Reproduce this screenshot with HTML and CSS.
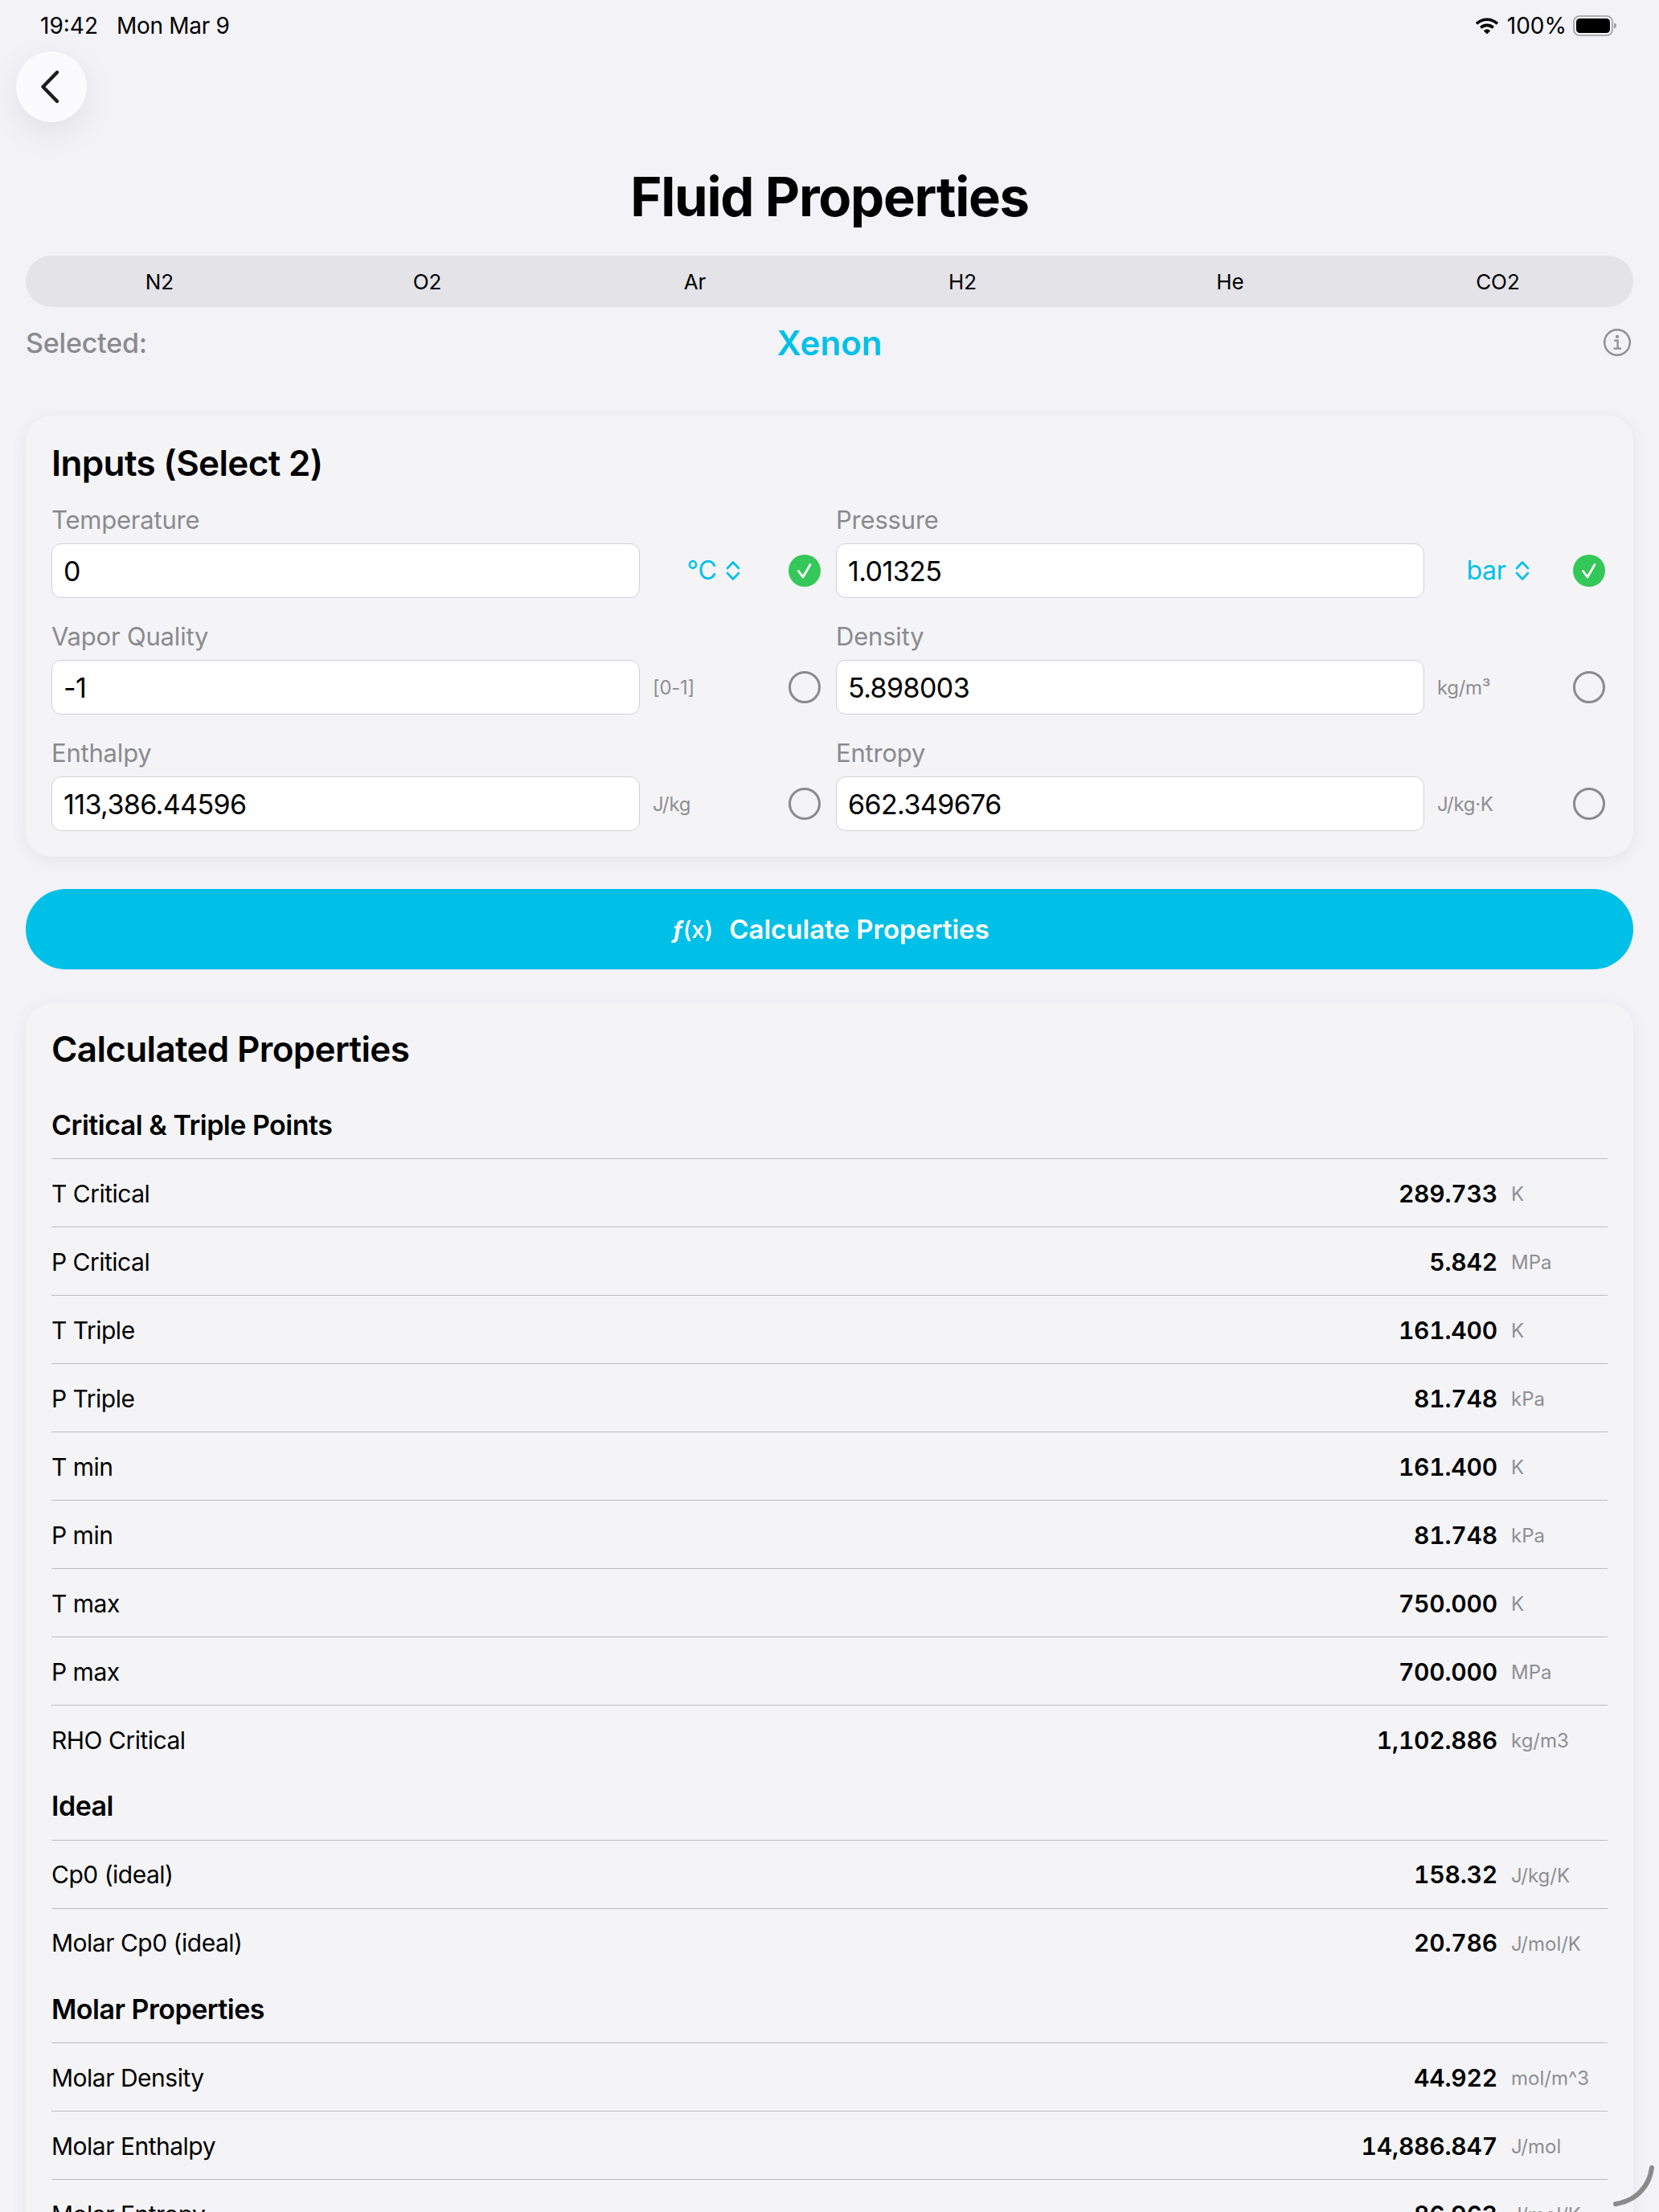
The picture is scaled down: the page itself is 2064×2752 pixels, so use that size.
FILE: index.html
```html
<!DOCTYPE html>
<html lang="en">
<head>
    <meta charset="UTF-8">
    <meta name="viewport" content="width=device-width, initial-scale=1.0">
    <title>Fluid Properties</title>
    <link rel="stylesheet" href="styles.css">
</head>
<body>
    <div class="screen">
        <!-- Status bar -->
        <div class="status-bar">
            <div class="status-left">
                <span>19:42</span>
                <span class="status-date">Mon Mar 9</span>
            </div>
            <div class="status-right">
                <svg class="wifi" width="30" height="22" viewBox="0 0 30 22">
                    <path d="M2 8.5C9.5 1.5 20.5 1.5 28 8.5" fill="none" stroke="#000" stroke-width="3.6"/>
                    <path d="M7.2 13.4C11.8 9.4 18.2 9.4 22.8 13.4" fill="none" stroke="#000" stroke-width="3.6"/>
                    <path d="M10.8 17.2C13.2 15 16.8 15 19.2 17.2L15 21.5Z" fill="#000"/>
                </svg>
                <span>100%</span>
                <svg class="battery" width="55" height="26" viewBox="0 0 55 26">
                    <rect x="1" y="1" width="48" height="24" rx="7" fill="none" stroke="#9a9a9c" stroke-width="1.6"/>
                    <rect x="4" y="4" width="42" height="18" rx="4.5" fill="#000"/>
                    <path d="M51 9.5C53 10 54 11.4 54 13C54 14.6 53 16 51 16.5Z" fill="#9a9a9c"/>
                </svg>
            </div>
        </div>

        <button class="back-button">
            <svg width="26" height="42" viewBox="0 0 26 42">
                <path d="M22 3L4.5 21L22 39" fill="none" stroke="#1c1c1e" stroke-width="4.4" stroke-linecap="round" stroke-linejoin="round"/>
            </svg>
        </button>

        <h1 class="page-title">Fluid Properties</h1>

        <div class="segments">
            <div class="segment">N2</div>
            <div class="segment">O2</div>
            <div class="segment">Ar</div>
            <div class="segment">H2</div>
            <div class="segment">He</div>
            <div class="segment">CO2</div>
        </div>

        <div class="selected-row">
            <span class="selected-label">Selected:</span>
            <span class="selected-name">Xenon</span>
            <svg class="info-icon" width="36" height="36" viewBox="0 0 36 36">
                <circle cx="18" cy="18" r="15.8" fill="none" stroke="#8e8e93" stroke-width="2.4"/>
                <circle cx="18" cy="10.8" r="2.1" fill="#8e8e93"/>
                <path d="M14.2 15.6H18.6V25.4M13.6 25.6H23" fill="none" stroke="#8e8e93" stroke-width="2.3"/>
            </svg>
        </div>

        <!-- Inputs -->
        <section class="card inputs-card">
            <h2 class="card-title">Inputs (Select 2)</h2>
            <div class="input-grid">
                <div class="field">
                    <label class="field-label">Temperature</label>
                    <div class="field-row">
                        <input class="field-input" value="0">
                        <div class="unit unit-picker">
                            <span>°C</span>
                            <svg width="18" height="26" viewBox="0 0 18 26"><path d="M2 10L9 2.5L16 10M2 16L9 23.5L16 16" fill="none" stroke="#00c0e8" stroke-width="2.6" stroke-linecap="round" stroke-linejoin="round"/></svg>
                        </div>
                        <div class="radio checked">
                            <svg width="40" height="40" viewBox="0 0 40 40"><circle cx="20" cy="20" r="20" fill="#34c759"/><path d="M12.5 20.5L18 28L27 12.5" fill="none" stroke="#fff" stroke-width="2.8" stroke-linecap="round" stroke-linejoin="round"/></svg>
                        </div>
                    </div>
                </div>
                <div class="field">
                    <label class="field-label">Pressure</label>
                    <div class="field-row">
                        <input class="field-input" value="1.01325">
                        <div class="unit unit-picker">
                            <span>bar</span>
                            <svg width="18" height="26" viewBox="0 0 18 26"><path d="M2 10L9 2.5L16 10M2 16L9 23.5L16 16" fill="none" stroke="#00c0e8" stroke-width="2.6" stroke-linecap="round" stroke-linejoin="round"/></svg>
                        </div>
                        <div class="radio checked">
                            <svg width="40" height="40" viewBox="0 0 40 40"><circle cx="20" cy="20" r="20" fill="#34c759"/><path d="M12.5 20.5L18 28L27 12.5" fill="none" stroke="#fff" stroke-width="2.8" stroke-linecap="round" stroke-linejoin="round"/></svg>
                        </div>
                    </div>
                </div>
                <div class="field">
                    <label class="field-label">Vapor Quality</label>
                    <div class="field-row">
                        <input class="field-input" value="-1">
                        <div class="unit">[0-1]</div>
                        <div class="radio"><span class="radio-ring"></span></div>
                    </div>
                </div>
                <div class="field">
                    <label class="field-label">Density</label>
                    <div class="field-row">
                        <input class="field-input" value="5.898003">
                        <div class="unit">kg/m³</div>
                        <div class="radio"><span class="radio-ring"></span></div>
                    </div>
                </div>
                <div class="field">
                    <label class="field-label">Enthalpy</label>
                    <div class="field-row">
                        <input class="field-input" value="113,386.44596">
                        <div class="unit">J/kg</div>
                        <div class="radio"><span class="radio-ring"></span></div>
                    </div>
                </div>
                <div class="field">
                    <label class="field-label">Entropy</label>
                    <div class="field-row">
                        <input class="field-input" value="662.349676">
                        <div class="unit">J/kg·K</div>
                        <div class="radio"><span class="radio-ring"></span></div>
                    </div>
                </div>
            </div>
        </section>

        <button class="calc-button">
            <span class="calc-icon"><i>ƒ</i>(x)</span>
            <span>Calculate Properties</span>
        </button>

        <!-- Results -->
        <section class="card results-card">
            <h2 class="card-title">Calculated Properties</h2>

            <h3 class="group-title">Critical &amp; Triple Points</h3>
            <div class="prop-row"><span class="prop-name">T Critical</span><span class="prop-value">289.733</span><span class="prop-unit">K</span></div>
            <div class="prop-row"><span class="prop-name">P Critical</span><span class="prop-value">5.842</span><span class="prop-unit">MPa</span></div>
            <div class="prop-row"><span class="prop-name">T Triple</span><span class="prop-value">161.400</span><span class="prop-unit">K</span></div>
            <div class="prop-row"><span class="prop-name">P Triple</span><span class="prop-value">81.748</span><span class="prop-unit">kPa</span></div>
            <div class="prop-row"><span class="prop-name">T min</span><span class="prop-value">161.400</span><span class="prop-unit">K</span></div>
            <div class="prop-row"><span class="prop-name">P min</span><span class="prop-value">81.748</span><span class="prop-unit">kPa</span></div>
            <div class="prop-row"><span class="prop-name">T max</span><span class="prop-value">750.000</span><span class="prop-unit">K</span></div>
            <div class="prop-row"><span class="prop-name">P max</span><span class="prop-value">700.000</span><span class="prop-unit">MPa</span></div>
            <div class="prop-row"><span class="prop-name">RHO Critical</span><span class="prop-value">1,102.886</span><span class="prop-unit">kg/m3</span></div>

            <h3 class="group-title">Ideal</h3>
            <div class="prop-row"><span class="prop-name">Cp0 (ideal)</span><span class="prop-value">158.32</span><span class="prop-unit">J/kg/K</span></div>
            <div class="prop-row"><span class="prop-name">Molar Cp0 (ideal)</span><span class="prop-value">20.786</span><span class="prop-unit">J/mol/K</span></div>

            <h3 class="group-title">Molar Properties</h3>
            <div class="prop-row"><span class="prop-name">Molar Density</span><span class="prop-value">44.922</span><span class="prop-unit">mol/m^3</span></div>
            <div class="prop-row"><span class="prop-name">Molar Enthalpy</span><span class="prop-value">14,886.847</span><span class="prop-unit">J/mol</span></div>
            <div class="prop-row"><span class="prop-name">Molar Entropy</span><span class="prop-value">86.963</span><span class="prop-unit">J/mol/K</span></div>
        </section>

        <!-- Window resize handle -->
        <svg class="resize-handle" width="54" height="52" viewBox="0 0 54 52">
            <path d="M49 3C46 26 30 44 4 48" fill="none" stroke="#8a8a8a" stroke-width="6" stroke-linecap="round"/>
        </svg>
    </div>
</body>
</html>
```

FILE: styles.css
```css
* {
    box-sizing: border-box;
}

body {
    margin: 0;
    font-family: Inter, "Noto Sans", sans-serif;
    background-color: #f2f2f7;
    color: #000;
}

.screen {
    position: relative;
    width: 2064px;
    height: 2752px;
    padding: 0 32px;
    overflow: hidden;
}

/* Status bar */
.status-bar {
    display: flex;
    justify-content: space-between;
    align-items: center;
    height: 64px;
    margin: 0 20px 0 18px;
    font-size: 28px;
    font-weight: 400;
}

.status-left {
    display: flex;
    gap: 23px;
}

.status-date {
    letter-spacing: -0.3px;
}

.status-right {
    display: flex;
    align-items: center;
    gap: 10px;
}

.battery {
    margin-left: -2px;
}

.back-button {
    position: absolute;
    top: 64px;
    left: 20px;
    display: flex;
    align-items: center;
    justify-content: center;
    width: 88px;
    height: 88px;
    padding: 0 4px 0 0;
    border: none;
    border-radius: 50%;
    background: #fbfbfd;
    box-shadow: 0 12px 40px rgba(0, 0, 0, 0.08);
}

.page-title {
    margin: 140px 0 32px;
    height: 82px;
    line-height: 82px;
    text-align: center;
    font-size: 67px;
    font-weight: 700;
    letter-spacing: -1.3px;
}

/* Fluid segments */
.segments {
    display: grid;
    grid-template-columns: repeat(6, 1fr);
    height: 64px;
    padding-right: 2px;
    border-radius: 32px;
    background: #e3e3e8;
}

.segment {
    display: flex;
    align-items: center;
    justify-content: center;
    font-size: 26px;
}

.selected-row {
    display: grid;
    grid-template-columns: 1fr auto 1fr;
    align-items: center;
    height: 58px;
    margin: 15px 0 62px;
}

.selected-label {
    font-size: 34px;
    font-weight: 500;
    letter-spacing: -0.2px;
    color: #8a8a8e;
}

.selected-name {
    font-size: 42px;
    font-weight: 600;
    color: #00c0e8;
}

.info-icon {
    justify-self: end;
    margin-right: 2px;
}

/* Cards */
.card {
    padding: 32px;
    border-radius: 32px;
    background: #f4f4f7;
    box-shadow: 0 4px 20px rgba(0, 0, 0, 0.06);
}

.card-title {
    margin: 0;
    font-size: 44px;
    font-weight: 600;
    line-height: 54px;
    letter-spacing: -0.65px;
}

/* Inputs */
.input-grid {
    display: grid;
    grid-template-columns: 1fr 1fr;
    column-gap: 16px;
    row-gap: 29px;
    margin-top: 25px;
}

.field-label {
    display: block;
    height: 40px;
    margin-bottom: 8px;
    line-height: 38px;
    font-size: 31px;
    letter-spacing: -0.2px;
    color: #8a8a8e;
}

.field-row {
    display: flex;
    align-items: center;
    gap: 16px;
    padding-right: 1px;
}

.field-input {
    flex: 1;
    min-width: 0;
    height: 68px;
    padding: 0 14px;
    border: 1.5px solid #d1d1d6;
    border-radius: 12px;
    background: #fff;
    font-family: inherit;
    font-size: 34px;
    letter-spacing: -0.6px;
    color: #000;
}

.unit {
    width: 151px;
    font-size: 24px;
    letter-spacing: -0.3px;
    color: #8e8e93;
}

.unit-picker {
    display: flex;
    align-items: center;
    justify-content: center;
    gap: 11px;
    padding-bottom: 1px;
    font-size: 32px;
    color: #00c0e8;
}

.radio {
    display: flex;
    align-items: center;
    justify-content: center;
    width: 44px;
    height: 44px;
}

.radio-ring {
    width: 40px;
    height: 40px;
    border: 3px solid #8a8a8e;
    border-radius: 50%;
}

.calc-button {
    display: flex;
    align-items: center;
    justify-content: center;
    gap: 20px;
    width: 100%;
    height: 100px;
    margin: 40px 0 42px;
    padding: 0 0 0 3px;
    border: none;
    border-radius: 50px;
    background: #00c0e8;
    font-family: inherit;
    font-size: 33px;
    font-weight: 600;
    color: #fff;
}

.calc-icon {
    font-size: 29px;
    font-weight: 500;
}

.calc-icon i {
    font-weight: 700;
}

/* Results */
.results-card {
    padding-top: 30px;
    padding-bottom: 0;
}

.results-card .card-title {
    margin-bottom: 26.5px;
}

.group-title {
    display: flex;
    align-items: center;
    height: 82.5px;
    margin: 0;
    padding-bottom: 1px;
    font-size: 34px;
    font-weight: 600;
    letter-spacing: -0.5px;
}

.prop-row {
    display: flex;
    align-items: center;
    height: 85px;
    padding-top: 1px;
    border-top: 1px solid #bcbcc0;
    font-size: 30px;
}

.prop-name {
    flex: 1;
    letter-spacing: -0.5px;
}

.prop-value {
    font-weight: 600;
    letter-spacing: -0.2px;
    font-variant-numeric: tabular-nums;
}

.prop-unit {
    width: 120px;
    margin-left: 17px;
    padding-top: 2px;
    font-size: 24px;
    color: #8e8e93;
}

.resize-handle {
    position: absolute;
    top: 2694px;
    left: 2006px;
}
```
